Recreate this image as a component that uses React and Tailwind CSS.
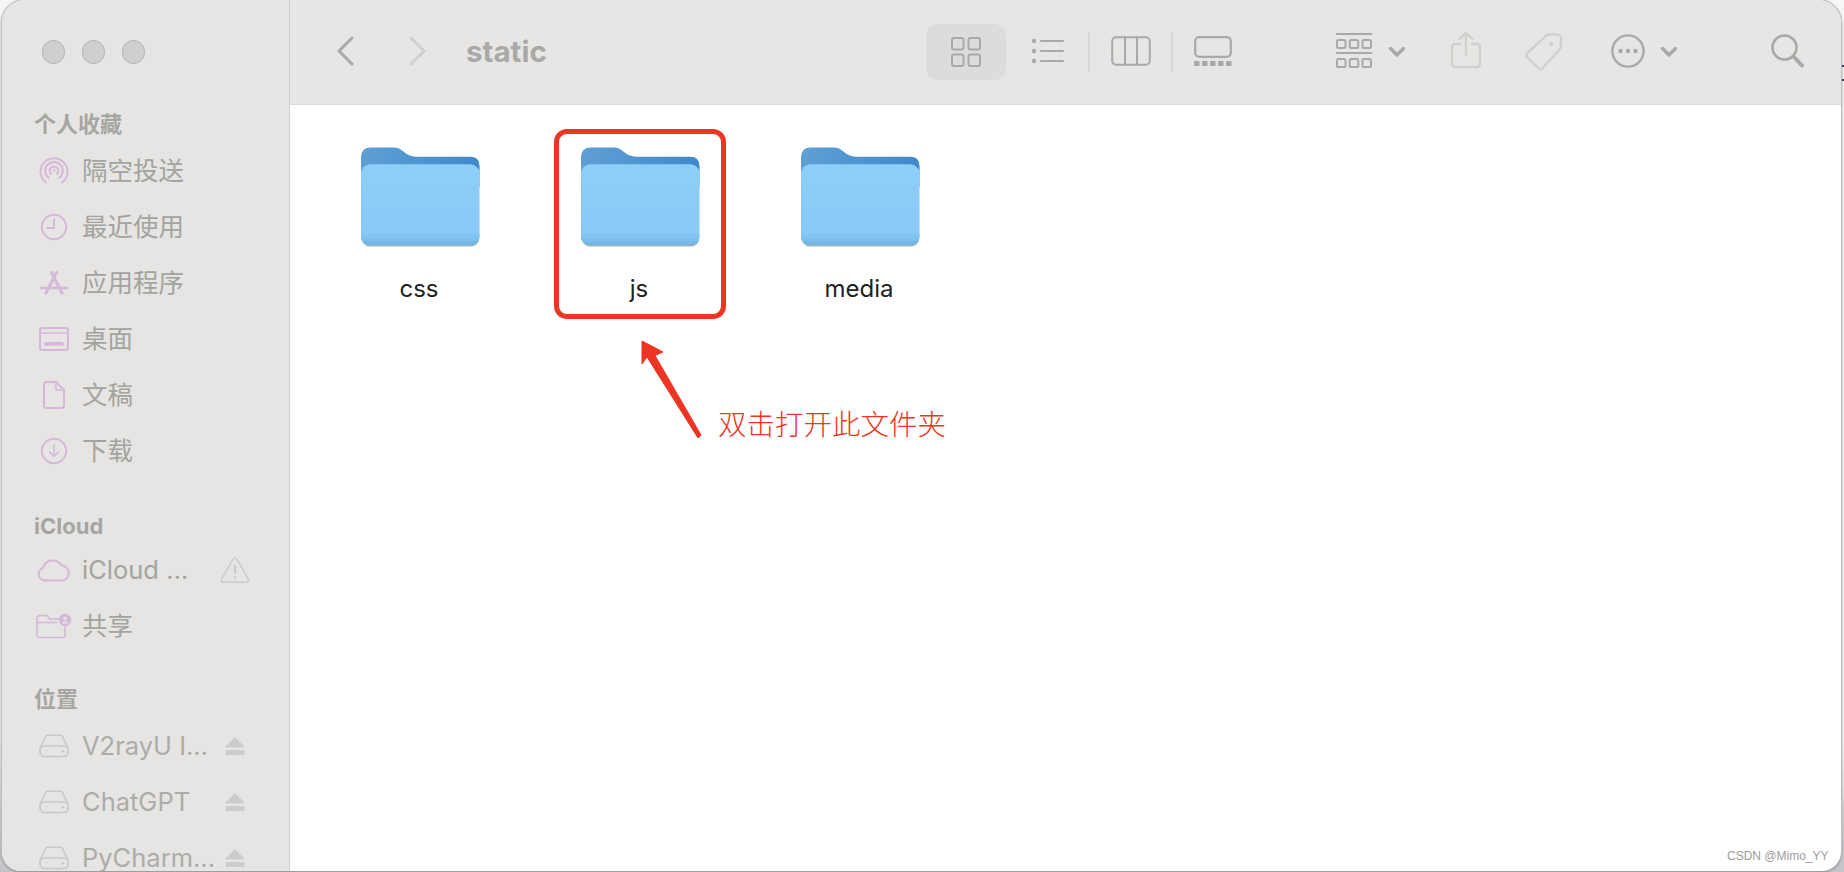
const sans = { fontFamily: 'Inter, "Noto Sans CJK SC", sans-serif' };

function P({ w = 30, h = 30, vb, className = "", children }) {
  return (
    <svg width={w} height={h} viewBox={vb || `0 0 ${w} ${h}`} fill="none" stroke="currentColor" strokeWidth="2" strokeLinecap="round" strokeLinejoin="round" className={`shrink-0 ${className}`}>
      {children}
    </svg>
  );
}

const AirDrop = () => (
  <P w={30} h={30}>
    <path d="M7 26.5A13.5 13.5 0 1 1 23 26.5" />
    <path d="M9.8 21.8A8.8 8.8 0 1 1 20.2 21.8" />
    <path d="M12 18A4.4 4.4 0 1 1 18 18" />
    <circle cx="15" cy="14.5" r="1.3" fill="currentColor" stroke="none" />
  </P>
);
const Clock = () => (
  <P w={28} h={28}>
    <circle cx="14" cy="14" r="12.2" />
    <path d="M14 6.5V15H7.5" />
  </P>
);
const AppStore = () => (
  <P w={28} h={24}>
    <path d="M11.5 1.5L22 22" strokeWidth="3" />
    <path d="M16.500 1.5L6 22" strokeWidth="3" />
    <path d="M1 17H27" strokeWidth="2.6" />
  </P>
);
const Desktop = () => (
  <P w={30} h={24}>
    <rect x="1" y="1" width="28" height="22" rx="2.5" />
    <path d="M1 6H29" strokeWidth="1.4" />
    <rect x="5.5" y="15" width="19" height="3.6" fill="currentColor" stroke="none" />
  </P>
);
const Doc = () => (
  <P w={22} h={28}>
    <path d="M3.5 1H13L21 9V24.5A2.5 2.5 0 0 1 18.5 27H3.5A2.5 2.5 0 0 1 1 24.5V3.5A2.5 2.5 0 0 1 3.5 1Z" />
    <path d="M13 1V9H21" strokeWidth="1.6" />
  </P>
);
const Download = () => (
  <P w={28} h={28}>
    <circle cx="14" cy="14" r="12.2" />
    <path d="M14 7.5V19M9.5 14.8L14 19.3L18.5 14.8" strokeWidth="1.6" />
  </P>
);
const Cloud = () => (
  <P w={34} h={24}>
    <path d="M8 22.5A6.5 6.5 0 0 1 6.2 9.8A10 10 0 0 1 24.5 7.5A7.6 7.6 0 0 1 26 22.5Z" />
  </P>
);
const Shared = () => (
  <P w={36} h={26}>
    <path d="M1 5V22.5A2 2 0 0 0 3 24.5H27A2 2 0 0 0 29 22.5V14" strokeWidth="1.6" />
    <path d="M1 5A2.5 2.5 0 0 1 3.5 2.5H11L14 6H22" strokeWidth="1.6" />
    <path d="M1 9.5H21" strokeWidth="1.4" />
    <circle cx="29" cy="7" r="6.2" fill="currentColor" stroke="none" />
    <circle cx="29" cy="5.2" r="1.8" fill="#e6e5e3" stroke="none" />
    <path d="M25.8 10.5A3.4 3.4 0 0 1 32.2 10.5Z" fill="#e6e5e3" stroke="none" />
  </P>
);
const Drive = () => (
  <P w={30} h={24}>
    <path d="M1 14L6.5 2.5A2 2 0 0 1 8.4 1.2H21.6A2 2 0 0 1 23.5 2.5L29 14" strokeWidth="1.6" />
    <rect x="1" y="12" width="28" height="10.5" rx="4.5" strokeWidth="1.6" />
    <circle cx="24" cy="17.3" r="1.4" fill="currentColor" stroke="none" />
  </P>
);
const Warning = () => (
  <P w={30} h={28}>
    <path d="M13 3.2A2.3 2.3 0 0 1 17 3.2L28.4 23.2A2 2 0 0 1 26.6 26.2H3.4A2 2 0 0 1 1.6 23.2Z" strokeWidth="1.6" />
    <path d="M15 9.5V17" strokeWidth="2.2" />
    <circle cx="15" cy="21.4" r="1.3" fill="currentColor" stroke="none" />
  </P>
);
const Eject = () => (
  <svg width="20" height="18" viewBox="0 0 20 18" fill="currentColor" className="shrink-0">
    <path d="M10 0L19.5 9.5A0.6 0.6 0 0 1 19 10.5H1A0.6 0.6 0 0 1 0.5 9.5Z" />
    <rect x="0.5" y="13" width="19" height="5" rx="1" />
  </svg>
);

function Row({ icon, text, trailing, muted }) {
  return (
    <div className="flex h-14 items-center pl-[33px] pr-[39px]">
      <span className={`flex w-[38px] justify-center ${muted ? "text-[#c9c8c6]" : "text-[#d5b8d8]"}`}>{icon}</span>
      <span className={`ml-[9px] flex-1 whitespace-nowrap text-[25.5px] leading-none ${muted ? "text-[#acaca9]" : "text-[#a3a3a0]"}`}>{text}</span>
      {trailing && <span className="flex w-[30px] justify-center text-[#cdccca]">{trailing}</span>}
    </div>
  );
}

function Heading({ children, className = "" }) {
  return <div className={`flex h-8 items-center pl-[32px] text-[22px] font-bold leading-none text-[#a5a5a3] ${className}`}>{children}</div>;
}

function Sidebar() {
  return (
    <aside className="w-[288px] shrink-0 overflow-hidden border-r border-[#cfcfcd] bg-[#e6e5e3]">
      <div className="flex h-[108px] items-start gap-[17px] pl-[40px] pt-[40px]">
        <span className="h-[24px] w-[23px] rounded-full border border-[#b3b2b0] bg-[#d0cfcd]" />
        <span className="h-[24px] w-[23px] rounded-full border border-[#b3b2b0] bg-[#d0cfcd]" />
        <span className="h-[24px] w-[23px] rounded-full border border-[#b3b2b0] bg-[#d0cfcd]" />
      </div>
      <Heading className="mb-[3px]">个人收藏</Heading>
      <Row icon={<AirDrop />} text="隔空投送" />
      <Row icon={<Clock />} text="最近使用" />
      <Row icon={<AppStore />} text="应用程序" />
      <Row icon={<Desktop />} text="桌面" />
      <Row icon={<Doc />} text="文稿" />
      <Row icon={<Download />} text="下载" />
      <Heading className="mt-[31px]">iCloud</Heading>
      <Row icon={<Cloud />} text="iCloud …" trailing={<Warning />} />
      <Row icon={<Shared />} text="共享" />
      <Heading className="mt-[29px] mb-[3px]">位置</Heading>
      <Row muted icon={<Drive />} text="V2rayU I..." trailing={<Eject />} />
      <Row muted icon={<Drive />} text="ChatGPT" trailing={<Eject />} />
      <Row muted icon={<Drive />} text="PyCharm..." trailing={<Eject />} />
    </aside>
  );
}

const Dim = "text-[#a9a9a7]";
const Faint = "text-[#d0d0ce]";

const Chev = () => (
  <svg width="18" height="12" viewBox="0 0 18 12" fill="none" stroke="currentColor" strokeWidth="3.4" strokeLinecap="round" strokeLinejoin="round" className={`shrink-0 ${Dim}`}>
    <path d="M2.5 2.5L9 9L15.5 2.5" />
  </svg>
);

function Toolbar() {
  return (
    <header className="flex h-[105px] shrink-0 items-start border-b border-[#d9d9d7] bg-[#e7e6e4] pl-[46px]">
      <svg width="18" height="30" viewBox="0 0 18 30" fill="none" stroke="currentColor" strokeWidth="3" strokeLinecap="round" strokeLinejoin="round" className={`mt-[36px] shrink-0 ${Dim}`}>
        <path d="M16 2L3 15L16 28" />
      </svg>
      <svg width="18" height="30" viewBox="0 0 18 30" fill="none" stroke="currentColor" strokeWidth="3" strokeLinecap="round" strokeLinejoin="round" className={`ml-[55px] mt-[36px] shrink-0 ${Faint}`}>
        <path d="M2 2L15 15L2 28" />
      </svg>
      <span className="ml-[39px] mt-[33px] w-[82px] whitespace-nowrap text-[29.5px] font-bold leading-9 text-[#a9a9a7]">static</span>

      <div className={`ml-[378px] mt-[24px] flex h-14 w-20 shrink-0 items-center justify-center rounded-xl bg-[#dcdcda] ${Dim}`}>
        <P w={30} h={30}>
          <rect x="1" y="1" width="11.5" height="11.5" rx="2" />
          <rect x="17.5" y="1" width="11.5" height="11.5" rx="2" />
          <rect x="1" y="17.5" width="11.5" height="11.5" rx="2" />
          <rect x="17.5" y="17.5" width="11.5" height="11.5" rx="2" />
        </P>
      </div>
      <P w={34} h={26} className={`ml-[25px] mt-[38px] ${Dim}`}>
        <circle cx="3" cy="3" r="2.2" fill="currentColor" stroke="none" />
        <circle cx="3" cy="13" r="2.2" fill="currentColor" stroke="none" />
        <circle cx="3" cy="23" r="2.2" fill="currentColor" stroke="none" />
        <path d="M10 3H32M10 13H32M10 23H32" />
      </P>
      <span className="ml-[23px] mt-[32px] h-10 w-[2px] shrink-0 bg-[#d8d8d6]" />
      <P w={40} h={30} className={`ml-[21px] mt-[36px] ${Dim}`}>
        <rect x="1.2" y="1.2" width="37.6" height="27.6" rx="4" />
        <path d="M14 1.2V28.8M26 1.2V28.8" />
      </P>
      <span className="ml-[20px] mt-[32px] h-10 w-[2px] shrink-0 bg-[#d8d8d6]" />
      <svg width="38" height="30" viewBox="0 0 38 30" fill="none" stroke="currentColor" strokeWidth="2.2" className={`ml-[21px] mt-[36px] shrink-0 ${Dim}`}>
        <rect x="1.2" y="1.2" width="35.6" height="19.6" rx="4" />
        <g fill="currentColor" stroke="none">
          <rect x="0" y="25" width="5.5" height="5" />
          <rect x="8" y="25" width="5.5" height="5" />
          <rect x="16" y="25" width="5.5" height="5" />
          <rect x="24" y="25" width="5.5" height="5" />
          <rect x="32" y="25" width="5.5" height="5" />
        </g>
      </svg>

      <svg width="36" height="35" viewBox="0 0 36 35" fill="none" stroke="currentColor" strokeWidth="2" className={`ml-[104px] mt-[33px] shrink-0 ${Dim}`}>
        <path d="M0 1H36M0 20H36" strokeWidth="2.2" />
        <rect x="1" y="7" width="8.5" height="8" rx="1.6" />
        <rect x="13.75" y="7" width="8.5" height="8" rx="1.6" />
        <rect x="26.5" y="7" width="8.5" height="8" rx="1.6" />
        <rect x="1" y="26" width="8.5" height="8" rx="1.6" />
        <rect x="13.75" y="26" width="8.5" height="8" rx="1.6" />
        <rect x="26.5" y="26" width="8.5" height="8" rx="1.6" />
      </svg>
      <span className="ml-[16px] mt-[46px]"><Chev /></span>
      <P w={30} h={38} className={`ml-[45px] mt-[31px] ${Faint}`}>
        <path d="M9 13H4A3 3 0 0 0 1 16V33A3 3 0 0 0 4 36H26A3 3 0 0 0 29 33V16A3 3 0 0 0 26 13H21" strokeWidth="2.4" />
        <path d="M15 24V2M8.5 8L15 1.5L21.5 8" strokeWidth="2.4" />
      </P>
      <svg width="38" height="38" viewBox="0 0 38 38" fill="none" stroke="currentColor" strokeWidth="2.4" strokeLinejoin="round" className={`ml-[44px] mt-[33px] shrink-0 ${Faint}`}>
        <path d="M24 1.5H32A4 4 0 0 1 36 5.5V13A4 4 0 0 1 34.8 16L17.5 35.4A2.5 2.5 0 0 1 14 35.5L2 24A2.5 2.5 0 0 1 2 20.5L21 2.7A4 4 0 0 1 24 1.5Z" />
        <circle cx="26" cy="11" r="2.2" fill="currentColor" stroke="none" />
      </svg>
      <svg width="34" height="34" viewBox="0 0 34 34" fill="none" stroke="currentColor" strokeWidth="2.4" className={`ml-[48px] mt-[34px] shrink-0 ${Dim}`}>
        <circle cx="17" cy="17" r="15.6" />
        <g fill="currentColor" stroke="none">
          <circle cx="9.5" cy="17" r="2.2" />
          <circle cx="17" cy="17" r="2.2" />
          <circle cx="24.5" cy="17" r="2.2" />
        </g>
      </svg>
      <span className="ml-[15px] mt-[46px]"><Chev /></span>
      <svg width="33" height="34" viewBox="0 0 33 34" fill="none" stroke="currentColor" strokeLinecap="round" className={`ml-[93px] mt-[34px] shrink-0 ${Dim}`}>
        <circle cx="13.5" cy="13.5" r="12" strokeWidth="2.6" />
        <path d="M22.5 22.5L31 31.5" strokeWidth="4" />
      </svg>
    </header>
  );
}

function Folder() {
  return (
    <svg width="119" height="100" viewBox="0 0 120 100" className="shrink-0">
      <defs>
        <linearGradient id="fb" x1="0" y1="0" x2="1" y2="0">
          <stop offset="0" stopColor="#5f9fd4" />
          <stop offset="1" stopColor="#3f88cc" />
        </linearGradient>
        <linearGradient id="ff" x1="0" y1="0" x2="0" y2="1">
          <stop offset="0" stopColor="#8dcff8" />
          <stop offset="1" stopColor="#86c9f5" />
        </linearGradient>
      </defs>
      <path d="M0 10Q0 0 10 0H33Q38 0 42 3.5Q49 9.5 57 9.5H110Q119.500 9.5 119.500 19V40H0Z" fill="url(#fb)" />
      <path d="M1 92V90A8.500 8.500 0 0 0 9 98.500H111A8.500 8.500 0 0 0 119 90V92A8 8 0 0 1 111 100H9A8 8 0 0 1 1 92Z" fill="#a9adb2" />
      <rect x="0" y="17" width="119.500" height="81.500" rx="9" fill="url(#ff)" />
      <path d="M0 87.500H119.500V90A8.500 8.500 0 0 1 111 98.500H8.500A8.500 8.500 0 0 1 0 90Z" fill="#82c5f2" />
      <path d="M0 91.500H119.500V90.500A8 8 0 0 1 111 98.500H8.500A8 8 0 0 1 0 90.500Z" fill="#7cbfed" />
      <path d="M2 94.500H117.500A8 8 0 0 1 111 98.500H8.500A8 8 0 0 1 2 94.500Z" fill="#75b8e7" />
    </svg>
  );
}

function FileItem({ name }) {
  return (
    <div className="flex w-[220px] flex-col items-center">
      <Folder />
      <span className="mt-[28px] pr-[2px] text-[24px] leading-7 text-[#222222]">{name}</span>
    </div>
  );
}

export default function App() {
  return (
    <div className="relative h-screen w-full overflow-hidden bg-gradient-to-b from-[#f6f6f7] from-85% to-[#c4c4c8]" style={sans}>
      <div className="-mt-px ml-[1px] mr-[2px] flex h-[872px] overflow-hidden rounded-b-[20px] rounded-t-[24px] border-x border-t border-[#bdbdc0] bg-white shadow-[0_1px_3px_rgba(0,0,0,0.3)]">
        <Sidebar />
        <main className="flex min-w-0 flex-1 flex-col">
          <Toolbar />
          <div className="flex flex-1 items-start pl-[20px] pt-[42px]">
            <FileItem name="css" />
            <FileItem name="js" />
            <FileItem name="media" />
          </div>
        </main>
      </div>

      <div className="absolute left-[554px] top-[129px] h-[190px] w-[172px] rounded-[13px] border-[5px] border-[#ee3524]" />
      <svg width="70" height="105" viewBox="0 0 70 105" className="absolute left-[636px] top-[336px]">
        <path d="M6 5L27 16L19 19.500L65 99L62 102L11 21L6 28Z" fill="#ee3524" stroke="#ee3524" strokeLinejoin="round" />
      </svg>
      <span className="absolute left-[718px] top-[405px] text-[28.5px] font-light leading-9 text-[#ee3524]" style={{ fontFamily: '"Noto Sans CJK SC", sans-serif' }}>双击打开此文件夹</span>
      <span className="absolute left-[1727px] top-[848px] text-[12px] leading-4 text-[#9c9c9c]" style={{ fontFamily: '"Liberation Sans", sans-serif' }}>CSDN @Mimo_YY</span>
      <span className="absolute right-0 top-[65px] h-[2px] w-[2px] bg-[#3a4256]" />
      <span className="absolute right-0 top-[79px] h-[2px] w-[2px] bg-[#3a4256]" />
    </div>
  );
}
